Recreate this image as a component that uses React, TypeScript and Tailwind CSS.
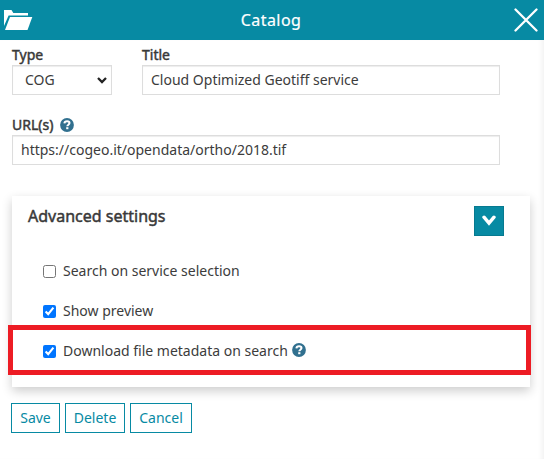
import type { ReactNode } from "react";

function HelpIcon() {
  return (
    <svg width="14" height="14" viewBox="0 0 14 14" className="block shrink-0">
      <circle cx="7" cy="7" r="6.9" fill="#31708f" />
      <path
        d="M4.4 5.4C4.5 3.8 5.6 3.3 7.1 3.3c1.5 0 2.4.7 2.4 1.8 0 1.6-2.2 1.6-2.2 3.2"
        fill="none"
        stroke="#fff"
        strokeWidth="2"
      />
      <rect x="6.2" y="9.2" width="2.2" height="2" fill="#fff" />
    </svg>
  );
}

function Label({ children }: { children: ReactNode }) {
  return (
    <div className="flex h-5 items-center text-[14px] leading-5 [-webkit-text-stroke:0.45px_#333]">
      {children}
    </div>
  );
}

function Option({ label, checked, help }: { label: string; checked?: boolean; help?: boolean }) {
  return (
    <label className="flex h-10 items-center">
      <input type="checkbox" defaultChecked={checked} className="m-0 mr-[7px] h-[13px] w-[13px]" />
      <span className="whitespace-nowrap">{label}</span>
      {help && (
        <span className="mb-[2px] ml-1">
          <HelpIcon />
        </span>
      )}
    </label>
  );
}

const field =
  "flex h-[30px] items-center border border-[#dddddd] bg-white shadow-[inset_0_1px_1px_rgba(0,0,0,0.075)]";
const button = "h-[30px] border border-[#078aa3] bg-white text-center text-[#078aa3]";

export default function App() {
  return (
    <div className="relative h-[459px] w-[544px] overflow-hidden bg-white font-['Noto_Sans',sans-serif] text-[14px] leading-5 text-[#3c3c3c]">
      <header className="flex h-10 items-center justify-between bg-[#078aa3] pl-[4px] pr-[6px] text-white">
        <svg width="29" height="20" viewBox="0 0 29 20" fill="#fff">
          <path d="M0 0h7.5l1.8 3H24v2.4H4.6L0 16z" />
          <path d="M6 7H28.3l-4.8 13H1z" />
        </svg>
        <h1 className="mr-[5px] text-[16px] leading-[22px] tracking-[0.45px] [-webkit-text-stroke:0.2px_#fff]">Catalog</h1>
        <svg width="24" height="24" viewBox="0 0 24 24" stroke="#fff" strokeWidth="2.3" strokeLinecap="round">
          <path d="M1.5 1.5l21 21M22.5 1.5l-21 21" />
        </svg>
      </header>

      <main className="h-[419px] pl-3 shadow-[inset_-5px_0_5px_-3px_rgba(0,0,0,0.06)]">
        <div className="flex gap-[30px] pt-[5px]">
          <div className="w-[100px]">
            <Label>Type</Label>
            <div className={`${field} justify-between pl-3 pr-1`}>
              COG
              <svg width="10" height="7" viewBox="0 0 10 7" fill="none" stroke="#222" strokeWidth="2.3">
                <path d="M1 1l4 4 4-4" />
              </svg>
            </div>
          </div>
          <div className="w-[358px]">
            <Label>Title</Label>
            <div className={`${field} px-2`}>Cloud Optimized Geotiff service</div>
          </div>
        </div>

        <div className="w-[488px] pt-[20px]">
          <Label>
            URL(s)
            <span className="mb-px ml-[7px]">
              <HelpIcon />
            </span>
          </Label>
          <div className={`${field} px-2`}>https://cogeo.it/opendata/ortho/2018.tif</div>
        </div>

        <section className="mt-[31px] h-[191px] w-[518px] bg-white shadow-[0_4px_10px_rgba(0,0,0,0.2)]">
          <div className="flex justify-between pl-4 pr-[26px] pt-[10px]">
            <h2 className="-mt-px text-[16px] leading-[22px] [-webkit-text-stroke:0.45px_#333]">Advanced settings</h2>
            <button className="flex h-[30px] w-[30px] items-center justify-center border border-[#067a90] bg-[#078aa3]">
              <svg width="14" height="12" viewBox="0 0 14 12" fill="none" stroke="#fff" strokeWidth="3.4" strokeLinecap="round">
                <path d="M2 2.2l5 6 5-6" />
              </svg>
            </button>
          </div>
          <div className="pl-[31px] pt-[15px]">
            <Option label="Search on service selection" />
            <Option label="Show preview" checked />
            <Option label="Download file metadata on search" checked help />
          </div>
        </section>

        <div className="-ml-px mt-4 flex gap-[5px]">
          <button className={`${button} w-[49px]`}>Save</button>
          <button className={`${button} w-[60px]`}>Delete</button>
          <button className={`${button} w-[62px]`}>Cancel</button>
        </div>
      </main>

      <div className="pointer-events-none absolute left-[8px] top-[325px] h-[50px] w-[523px] border-[5px] border-[#ed1c24]" />
    </div>
  );
}
